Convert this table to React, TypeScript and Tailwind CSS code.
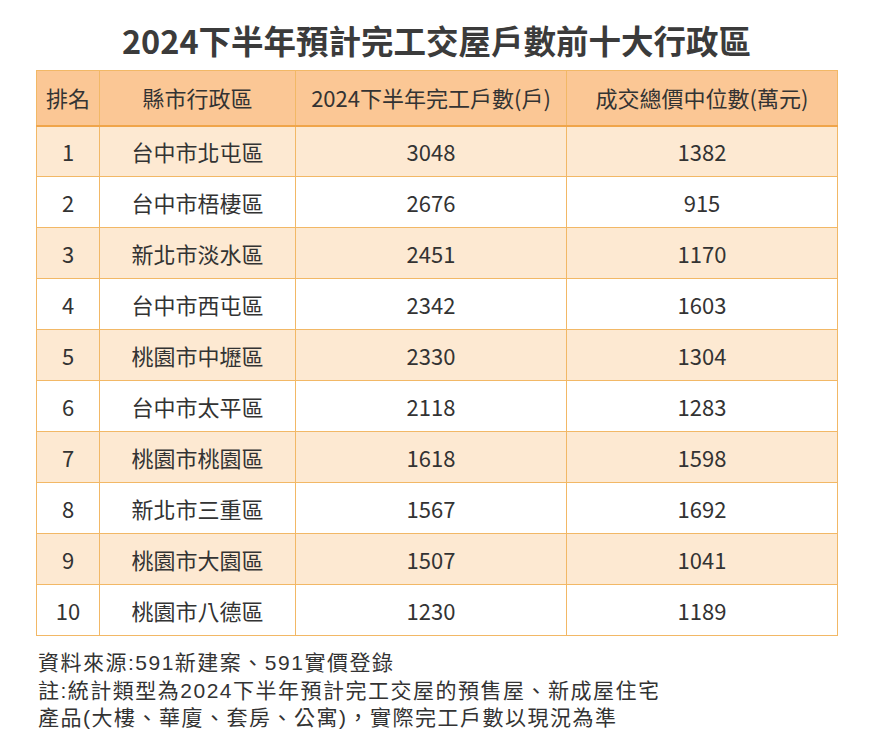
const rows = [
  { rank: 1, area: "台中市北屯區", units: "3048", price: "1382" },
  { rank: 2, area: "台中市梧棲區", units: "2676", price: "915" },
  { rank: 3, area: "新北市淡水區", units: "2451", price: "1170" },
  { rank: 4, area: "台中市西屯區", units: "2342", price: "1603" },
  { rank: 5, area: "桃園市中壢區", units: "2330", price: "1304" },
  { rank: 6, area: "台中市太平區", units: "2118", price: "1283" },
  { rank: 7, area: "桃園市桃園區", units: "1618", price: "1598" },
  { rank: 8, area: "新北市三重區", units: "1567", price: "1692" },
  { rank: 9, area: "桃園市大園區", units: "1507", price: "1041" },
  { rank: 10, area: "桃園市八德區", units: "1230", price: "1189" },
];

const headings = ["排名", "縣市行政區", "2024下半年完工戶數(戶)", "成交總價中位數(萬元)"];

export default function App() {
  return (
    <div
      className="min-h-[751px] w-[885px] bg-white text-[#333333]"
      style={{ fontFamily: '"Noto Sans CJK TC", "Noto Sans", sans-serif' }}
    >
      <div className="ml-[36px] w-[801px]">
        <h1 className="pt-[20px] text-center text-[32.5px] font-bold leading-[40px] text-[#3b3b3b]">
          2024下半年預計完工交屋戶數前十大行政區
        </h1>

        <table className="mt-[10px] w-full table-fixed border-collapse text-center">
          <colgroup>
            <col className="w-[63px]" />
            <col className="w-[196px]" />
            <col className="w-[271px]" />
            <col className="w-[271px]" />
          </colgroup>
          <thead>
            <tr className="h-[55px] border-b-2 border-b-[#f0a54a] bg-[#fbc795]">
              {headings.map((heading) => (
                <th
                  key={heading}
                  className="border border-[#f2b866] text-[22px] font-normal text-[#333333]"
                >
                  {heading}
                </th>
              ))}
            </tr>
          </thead>
          <tbody>
            {rows.map((row) => (
              <tr
                key={row.rank}
                className={`h-[51px] ${row.rank % 2 === 1 ? "bg-[#fde9d2]" : "bg-white"}`}
              >
                <td className="border border-[#f2b866] text-[22px]">{row.rank}</td>
                <td className="border border-[#f2b866] text-[22px]">{row.area}</td>
                <td className="border border-[#f2b866] text-[22px]">{row.units}</td>
                <td className="border border-[#f2b866] text-[22px]">{row.price}</td>
              </tr>
            ))}
          </tbody>
        </table>
      </div>

      {/* Source note: condensed look, wide advance */}
      <div
        className="ml-[38px] mt-[13px] text-[21px] leading-[27.5px] tracking-[1.5px] text-[#333333]"
        style={{ fontFamily: '"Liberation Sans", "Noto Sans CJK TC", sans-serif' }}
      >
        <p>資料來源:591新建案、591實價登錄</p>
        <p>註:統計類型為2024下半年預計完工交屋的預售屋、新成屋住宅</p>
        <p>產品(大樓、華廈、套房、公寓)，實際完工戶數以現況為準</p>
      </div>
    </div>
  );
}
